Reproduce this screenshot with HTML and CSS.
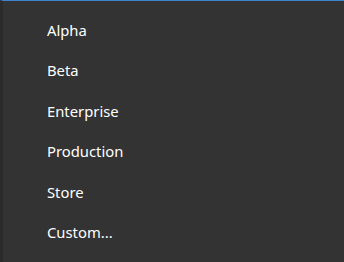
FILE: index.html
```html
<!DOCTYPE html>
<html lang="en">
<head>
  <meta charset="UTF-8" />
  <title>Channel menu</title>
  <link rel="stylesheet" href="styles.css">
</head>
<body>
  <div class="menu">
    <ul class="menu-list">
      <li class="menu-item">Alpha</li>
      <li class="menu-item">Beta</li>
      <li class="menu-item">Enterprise</li>
      <li class="menu-item">Production</li>
      <li class="menu-item">Store</li>
      <li class="menu-item">Custom...</li>
    </ul>
  </div>
</body>
</html>
```

FILE: styles.css
```css
:root {
  --bg: #333333;
  --edge: #2b2b2b;
  --accent: #3c84d0;
  --text: #ffffff;
}

body {
  margin: 0;
  padding: 0;
  background: var(--bg);
  font-family: 'Noto Sans', 'Open Sans', sans-serif;
}

.menu {
  height: 262px;
  box-sizing: border-box;
  background: var(--bg);
  border-top: 1px solid var(--accent);
  border-left: 3px solid var(--edge);
  padding-top: 9px;
}

.menu-list {
  list-style: none;
  margin: 0;
  padding: 0;
}

.menu-item {
  height: 40.4px;
  line-height: 40.4px;
  padding-left: 44px;
  color: var(--text);
  font-size: 14.8px;
}
```
